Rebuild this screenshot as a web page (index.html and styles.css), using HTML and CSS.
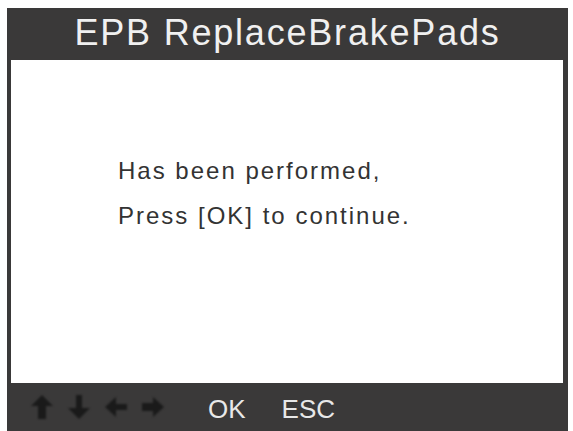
FILE: index.html
```html
<!DOCTYPE html>
<html>
<head>
<meta charset="utf-8">
<link rel="stylesheet" href="styles.css">
</head>
<body>
<div class="device">
  <div class="header">EPB ReplaceBrakePads</div>
  <div class="screen">
    <p class="line">Has been performed,</p>
    <p class="line">Press [OK] to continue.</p>
  </div>
  <div class="footer">
    <div class="icons">
      <svg class="icon" viewBox="0 0 24 26"><polygon points="12,1 23,12 16,12 16,25 8,25 8,12 1,12"/></svg>
      <svg class="icon" viewBox="0 0 24 26"><polygon points="12,25 23,14 15,14 15,1 9,1 9,14 1,14"/></svg>
      <svg class="icon" viewBox="0 0 24 26"><polygon points="1,13 12,3 12,10 23,10 23,16 12,16 12,23"/></svg>
      <svg class="icon" viewBox="0 0 24 26"><polygon points="23,13 12,3 12,9 1,9 1,17 12,17 12,23"/></svg>
    </div>
    <span class="key key-ok">OK</span>
    <span class="key">ESC</span>
  </div>
</div>
</body>
</html>
```

FILE: styles.css
```css
html, body {
  margin: 0;
  padding: 0;
  background: #ffffff;
}
.device {
  margin: 8px 5px 0 7px;
  height: 423px;
  background: #3a3939;
  display: flex;
  flex-direction: column;
  font-family: "Liberation Sans", Arial, sans-serif;
}
.header {
  height: 52px;
  line-height: 49px;
  padding-bottom: 3px;
  box-sizing: border-box;
  text-align: center;
  color: #f0f0f0;
  font-size: 36px;
  letter-spacing: 1.8px;
  white-space: nowrap;
}
.screen {
  height: 323px;
  margin: 0 5px 0 4px;
  background: #ffffff;
  padding: 88px 0 0 107px;
  box-sizing: border-box;
}
.line {
  margin: 0;
  font-size: 24px;
  line-height: 45px;
  letter-spacing: 2px;
  color: #333333;
  white-space: nowrap;
}
.footer {
  height: 48px;
  display: flex;
  align-items: center;
  padding-left: 23px;
  box-sizing: border-box;
}
.icons {
  display: flex;
  gap: 13px;
  filter: blur(1px);
}
.icon {
  width: 24px;
  height: 26px;
  fill: #1a1a1a;
}
.key {
  font-size: 26px;
  color: #e8e8e8;
  padding-top: 4px;
  line-height: 40px;
}
.key-ok {
  margin-left: 43px;
  margin-right: 36px;
}
```
